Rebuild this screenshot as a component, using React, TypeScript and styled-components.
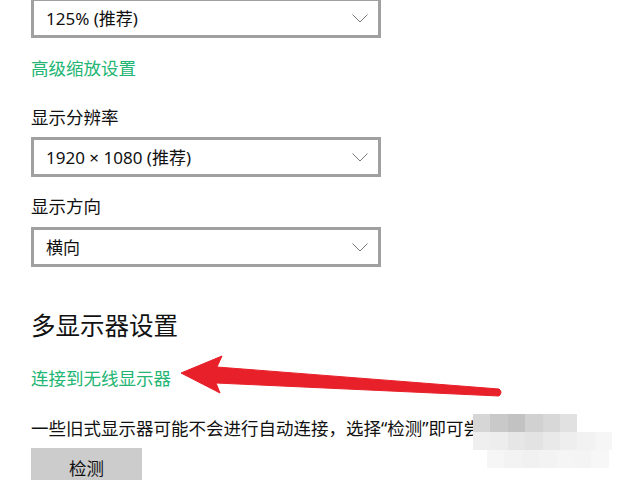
import React from 'react';
import styled, { createGlobalStyle } from 'styled-components';

const GlobalStyle = createGlobalStyle`
  html, body {
    margin: 0;
    padding: 0;
    background: #ffffff;
    overflow: hidden;
  }
  body {
    font-family: "Noto Sans", "Noto Sans CJK SC", sans-serif;
    color: #111;
  }
`;

const Page = styled.div`
  position: relative;
  width: 640px;
  height: 480px;
  overflow: hidden;
  padding-left: 31px;
  box-sizing: border-box;
  display: flex;
  flex-direction: column;
  align-items: flex-start;

  & > * {
    flex-shrink: 0;
  }
`;

const Select = styled.div<{ $top: number }>`
  box-sizing: border-box;
  width: 350px;
  height: 40px;
  margin-top: ${p => p.$top}px;
  border: 3px solid #a0a0a0;
  background: #fff;
  display: flex;
  align-items: center;
  justify-content: space-between;
  padding: 0 10px 0 12px;
  font-size: 17px;
  line-height: 1;
`;

const Label = styled.div<{ $top: number }>`
  margin-top: ${p => p.$top}px;
  font-size: 17.5px;
  line-height: 24px;
  color: #111;
`;

const Link = styled(Label)`
  color: #22b573;
`;

const Heading = styled.div<{ $top: number }>`
  margin-top: ${p => p.$top}px;
  font-size: 24.5px;
  line-height: 34px;
  color: #111;
`;

const Paragraph = styled(Label)`
  white-space: nowrap;
`;

const Button = styled.div`
  margin-top: 8px;
  width: 111px;
  height: 40px;
  background: #cccccc;
  display: flex;
  align-items: center;
  justify-content: center;
  font-size: 17.5px;
  line-height: 24px;
  color: #111;
`;

const Overlay = styled.svg`
  position: absolute;
  left: 0;
  top: 0;
  pointer-events: none;
`;

const Mosaic = styled.div`
  position: absolute;
  left: 473px;
  top: 414px;
  display: flex;
  flex-direction: column;
`;

const MosaicRow = styled.div<{ $indent: number }>`
  display: flex;
  padding-left: ${p => p.$indent}px;
`;

const Cell = styled.div<{ $c: string }>`
  width: 17.4px;
  height: 18px;
  background: ${p => p.$c};
`;

const Chevron = () => (
  <svg width="16" height="9" viewBox="0 0 16 9">
    <path d="M0.5 0.5 L8 8 L15.5 0.5" fill="none" stroke="#6a6a6a" strokeWidth="0.9" />
  </svg>
);

const mosaic: { indent: number; cells: string[] }[] = [
  { indent: 0, cells: ['#d6d6d6', '#c9c9c9', '#c2c2c2', '#d1d1d1', '#d8d8d8', '#e1e1e1'] },
  { indent: 0, cells: ['#efefef', '#ededed', '#e6e6e6', '#e3e3e3', '#e9e9e9', '#eeeeee', '#f2f2f2', '#f6f6f6'] },
  { indent: 14, cells: ['#f6f6f6', '#f3f3f3', '#f1f1f1', '#f3f3f3', '#f5f5f5', '#f4f4f4', '#f7f7f7'] },
];

export default function App() {
  return (
    <Page>
      <GlobalStyle />
      <Select $top={-2}>
        <span>125% (推荐)</span>
        <Chevron />
      </Select>
      <Link $top={18}>高级缩放设置</Link>
      <Label $top={25}>显示分辨率</Label>
      <Select $top={8}>
        <span>1920 × 1080 (推荐)</span>
        <Chevron />
      </Select>
      <Label $top={17}>显示方向</Label>
      <Select $top={9}>
        <span>横向</span>
        <Chevron />
      </Select>
      <Heading $top={42}>多显示器设置</Heading>
      <Link $top={23}>连接到无线显示器</Link>
      <Paragraph $top={26}>一些旧式显示器可能不会进行自动连接，选择“检测”即可尝</Paragraph>
      <Button>检测</Button>

      <Mosaic>
        {mosaic.map((row, i) => (
          <MosaicRow key={i} $indent={row.indent}>
            {row.cells.map((c, j) => (
              <Cell key={j} $c={c} />
            ))}
          </MosaicRow>
        ))}
      </Mosaic>

      <Overlay width="640" height="480" viewBox="0 0 640 480">
        <path
          d="M181 373 L222 356 L217 367 L499 389 Q503 392 499 396 L216 383 L220 393 Z"
          fill="#e8202a"
          stroke="#e8202a"
          strokeWidth="1"
          strokeLinejoin="round"
        />
      </Overlay>
    </Page>
  );
}
